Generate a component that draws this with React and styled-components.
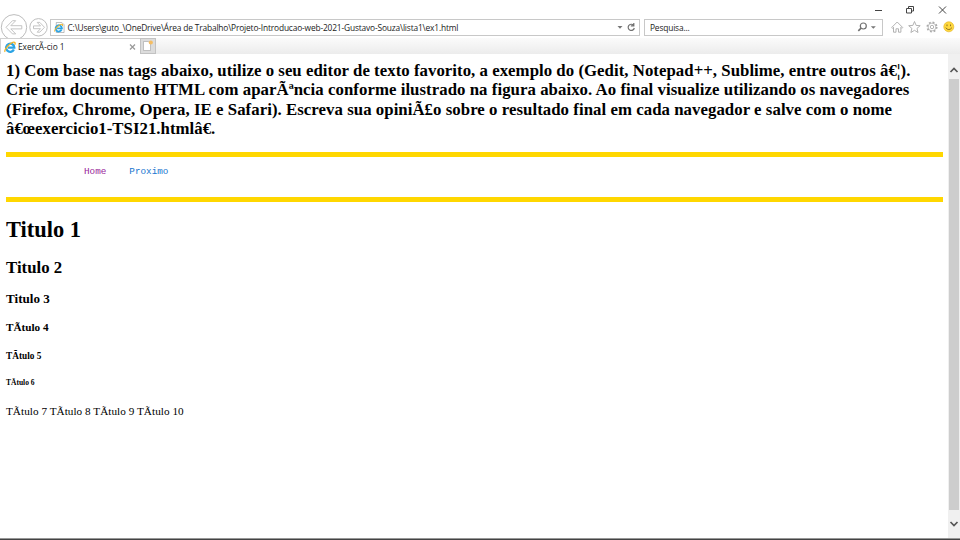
import React from "react";
import styled, { createGlobalStyle } from "styled-components";

const Global = createGlobalStyle`
  * { box-sizing: border-box; }
  body { margin: 0; background: #fff; overflow: hidden; }
`;
const Window = styled.div`
  width: 960px; height: 540px; display: flex; flex-direction: column;
  background: #fff; color: #000; overflow: hidden;
  font-family: "Open Sans", "Noto Sans", sans-serif;
`;
const TitleBar = styled.div`
  height: 16px; flex: none; display: flex; justify-content: flex-end;
  svg { display: block; }
`;
const Toolbar = styled.div`
  height: 22px; flex: none; display: flex; align-items: center;
`;
const NavButtons = styled.div`
  width: 50px; height: 28px; flex: none;
  svg { display: block; }
`;
const Field = styled.div`
  width: ${(p) => p.$width}px; height: 17px; margin: 1px 4px 0 0; flex: none;
  display: flex; align-items: center; border: 1px solid #c8c8c8; background: #fff;
  padding-left: ${(p) => p.$pad}px;
  svg { display: block; flex: none; }
`;
const Label = styled.span`
  flex: ${(p) => (p.$grow ? 1 : "none")}; white-space: pre; color: #222;
  font-size: 8.4px; line-height: 12px; letter-spacing: ${(p) => p.$track || 0}px;
  margin-left: ${(p) => p.$indent || 0}px;
`;
const Tools = styled.div`
  flex: none; margin-left: 4px;
  svg { display: block; }
`;
const TabStrip = styled.div`
  height: 16px; flex: none; display: flex;
  background: linear-gradient(#fbfbfb, #ececec);
`;
const Tab = styled.div`
  width: 140px; display: flex; align-items: center; padding: 1px 3px 0 3px; gap: 2px;
  background: #fff; border: 1px solid #d0d0d0; border-bottom: 0; border-right: 0;
  svg { display: block; flex: none; }
`;
const NewTab = styled.div`
  width: 16px; height: 16px; border: 1px solid #c2c2c2; background: #dcdcdc;
  svg { display: block; }
`;
const Viewport = styled.div`
  height: 484px; flex: none; display: flex;
`;
const Page = styled.main`
  width: 948px; padding: 7px 5px 0 6px; overflow: hidden;
  font-family: "Liberation Serif", serif;
`;
const Question = styled.h2`
  margin: 0; font-size: 16.8px; line-height: 19.4px; font-weight: 700; height: 78px;
`;
const Line = styled.span`
  display: block; white-space: pre; width: max-content; letter-spacing: ${(p) => p.$track}px;
`;
const Rule = styled.div`
  height: 5px; background: #ffd700; margin-top: ${(p) => p.$top}px;
`;
const Menu = styled.nav`
  display: flex; gap: 23px; margin: 9px 0 0 78px; height: 12px;
  font: 9.3px/12px "Liberation Mono", monospace;
`;
const MenuLink = styled.a`
  color: ${(p) => p.$color};
`;
const Heading = styled.div`
  width: max-content; white-space: pre; font-weight: ${(p) => p.$weight || 700};
  font-size: ${(p) => p.$size}px; line-height: ${(p) => p.$line}px;
  margin-top: ${(p) => p.$top}px; letter-spacing: ${(p) => p.$track || 0}px;
`;
const ScrollBar = styled.div`
  width: 12px; display: flex; flex-direction: column; background: #f0f0f0;
  svg { display: block; flex: none; }
`;
const Thumb = styled.div`
  height: 431px; margin: 0 0 0 1px; width: 10px; background: #cdcdcd;
`;
const TaskbarEdge = styled.div`
  height: 2px; flex: none; background: #434343; border-top: 1px solid #979797;
`;

const BrowserLogo = ({ size, page }) => (
  <svg width={size} height={size} viewBox="0 0 12 12" fill="none">
    {page && <path d="M2.5.5h6l2.500 2.500v8.500H2.500z" fill="#fff" stroke="#999" strokeWidth=".7" />}
    <g transform={page ? "translate(0 1.300) scale(.84)" : undefined}>
      <path d="M9.900 8.500A4.100 4.100 0 1 1 10.300 6.600H4" stroke="#2ba3e4" strokeWidth="2.300" />
      <path d="M1.100 10.800C-.5 8.800 7.400.5 10.500 1.300c1 .3.7 1.600.2 2.500" stroke="#efb52b" strokeWidth="1.300" />
    </g>
  </svg>
);

export default function App() {
  return (
    <Window>
      <Global />
      <TitleBar>
        <svg width="90" height="16" fill="none" stroke="#444" strokeWidth="1">
          <path d="M5 10.500h7M36.500 8.500h5v4.500h-5zM38.500 8V6.500h5v4.500H42M69 6.500l7 7M76 6.500l-7 7" />
        </svg>
      </TitleBar>
      <Toolbar>
        <NavButtons>
          <svg width="50" height="28" fill="none" stroke="#bdbdbd">
            <circle cx="14" cy="14.300" r="12.700" />
            <circle cx="38.500" cy="14.300" r="8.700" />
            <path d="M6 14.300l6.500-6.600h3.200l-4.900 5h11v3.200h-11l4.900 5h-3.200zM44.500 14.300l-4.700-4.900h-2.600l3.300 3.500h-7v2.800h7l-3.300 3.500h2.600z" strokeWidth=".9" />
          </svg>
        </NavButtons>
        <Field $width={590} $pad={3}>
          <BrowserLogo size={11} page />
          <Label $grow $indent={2.5} $track={-0.163}>{"C:\\Users\\guto_\\OneDrive\\Área de Trabalho\\Projeto-Introducao-web-2021-Gustavo-Souza\\lista1\\ex1.html"}</Label>
          <svg width="24" height="15" fill="none">
            <path d="M2.500 6h5L5 8.700z" fill="#777" />
            <path d="M18.500 5.200A3.100 3.100 0 1 0 19.300 8M18.800 2.900v3h-3" stroke="#707070" strokeWidth="1.200" />
          </svg>
        </Field>
        <Field $width={239} $pad={5}>
          <Label $grow $track={-0.17}>Pesquisa...</Label>
          <svg width="28" height="15" fill="none">
            <circle cx="9.300" cy="6" r="3" stroke="#707070" strokeWidth="1.200" />
            <path d="M7.100 8.200L4.300 10.800" stroke="#707070" strokeWidth="1.600" />
            <path d="M16.800 6.200h5L19.300 8.800z" fill="#777" />
          </svg>
        </Field>
        <Tools>
          <svg width="68" height="16" fill="none" stroke="#aaa" strokeWidth=".9">
            <path d="M.7 8.500L6.200 3l5.500 5.500-.8.800-1-1v4.900H7.500V9.800H5v3.400H2.500V8.300l-1 1z" />
            <path d="M23.500 2.500l1.600 3.900 4.100.3-3.200 2.700 1 4.100-3.500-2.200-3.600 2.200 1-4.100-3.200-2.700 4.200-.3z" />
            <circle cx="41" cy="8" r="4.700" strokeWidth="1.700" strokeDasharray="1.850 1.841" />
            <circle cx="41" cy="8" r="3.900" strokeWidth=".7" />
            <circle cx="41" cy="8" r="1.700" />
            <circle cx="57.800" cy="7.800" r="5" fill="#ffd83d" stroke="#e5b72d" strokeWidth=".7" />
            <path d="M56 5.500v1.700M59.500 5.500v1.700M54.700 8.700q3.100 3.800 6.200 0" stroke="#80651f" strokeWidth=".9" />
          </svg>
        </Tools>
      </Toolbar>
      <TabStrip>
        <Tab>
          <BrowserLogo size={12} />
          <Label $grow $track={-0.07}>ExercÃ-cio 1</Label>
          <svg width="8" height="8" fill="none" stroke="#999" strokeWidth="1.200">
            <path d="M1 1.500l5 5M6 1.500l-5 5" />
          </svg>
        </Tab>
        <NewTab>
          <svg width="14" height="14" fill="none">
            <path d="M2.500 2.500h5l2 2v7h-7z" fill="#fff" stroke="#aaa" strokeWidth=".7" />
            <circle cx="9.800" cy="3.500" r="2.100" fill="#f5bd62" />
          </svg>
        </NewTab>
      </TabStrip>
      <Viewport>
        <Page>
          <Question>
            <Line $track={0.038}>1) Com base nas tags abaixo, utilize o seu editor de texto favorito, a exemplo do (Gedit, Notepad++, Sublime, entre outros â€¦).</Line>
            <Line $track={0.05}>Crie um documento HTML com aparÃªncia conforme ilustrado na figura abaixo. Ao final visualize utilizando os navegadores</Line>
            <Line $track={0.05}>(Firefox, Chrome, Opera, IE e Safari). Escreva sua opiniÃ£o sobre o resultado final em cada navegador e salve com o nome</Line>
            <Line $track={0.03}>â€œexercicio1-TSI21.htmlâ€.</Line>
          </Question>
          <Rule $top={13} />
          <Menu>
            <MenuLink $color="#982199">Home</MenuLink>
            <MenuLink $color="#1976cf">Proximo</MenuLink>
          </Menu>
          <Rule $top={19} />
          <Heading $size={22.4} $line={26} $top={15}>Titulo 1</Heading>
          <Heading $size={16.8} $line={20} $top={15}>Titulo 2</Heading>
          <Heading $size={13.1} $line={16} $top={13}>Titulo 3</Heading>
          <Heading $size={11.2} $line={14} $top={13}>TÃtulo 4</Heading>
          <Heading $size={9.3} $line={12} $top={16}>TÃtulo 5</Heading>
          <Heading $size={7.5} $line={10} $top={16}>TÃtulo 6</Heading>
          <Heading $size={11.2} $line={14} $top={16} $weight={400} $track={0.04}>TÃtulo 7 TÃtulo 8 TÃtulo 9 TÃtulo 10</Heading>
        </Page>
        <ScrollBar>
          <svg width="12" height="25" fill="none" stroke="#555" strokeWidth="1.700"><path d="M2.500 18L6 14.500 9.500 18" /></svg>
          <Thumb />
          <svg width="12" height="28" fill="none" stroke="#555" strokeWidth="1.700"><path d="M2.500 12L6 15.500 9.500 12" /></svg>
        </ScrollBar>
      </Viewport>
      <TaskbarEdge />
    </Window>
  );
}
